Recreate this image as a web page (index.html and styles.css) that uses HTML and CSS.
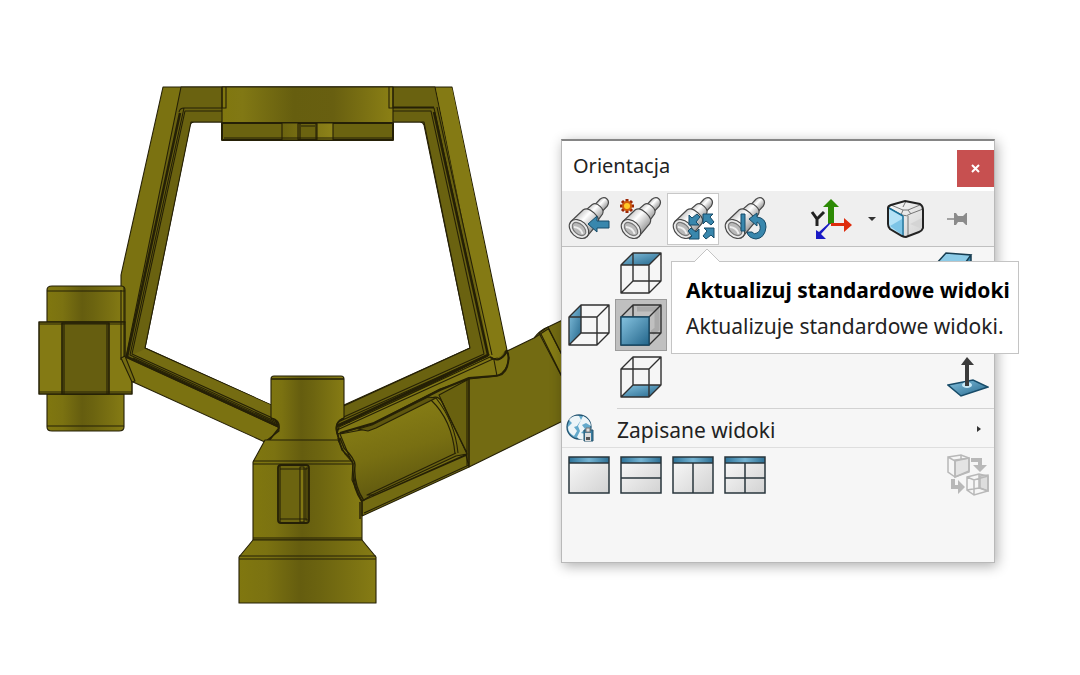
FILE: index.html
```html
<!DOCTYPE html>
<html lang="pl">
<head>
<meta charset="utf-8">
<title>Orientacja</title>
<link rel="stylesheet" href="styles.css">
</head>
<body>
<main class="workspace">
  <svg class="model" viewBox="0 0 1080 675" aria-label="Model 3D" role="img">
    <defs>
      <linearGradient id="cyl"><stop offset="0" stop-color="#80770f"/><stop offset=".2" stop-color="#7b7211"/><stop offset=".45" stop-color="#655d0f"/><stop offset=".6" stop-color="#6c6410"/><stop offset="1" stop-color="#867c14"/></linearGradient>
      <linearGradient id="block"><stop offset="0" stop-color="#80770f"/><stop offset=".12" stop-color="#817814"/><stop offset=".42" stop-color="#665e0f"/><stop offset=".65" stop-color="#685f10"/><stop offset="1" stop-color="#8b8015"/></linearGradient>
      <linearGradient id="pipe" x1="0" y1="0" x2=".35" y2="1"><stop offset="0" stop-color="#746b12"/><stop offset=".25" stop-color="#857c15"/><stop offset=".6" stop-color="#786f12"/><stop offset="1" stop-color="#5d560f"/></linearGradient>
      <linearGradient id="tab"><stop offset="0" stop-color="#6b630f"/><stop offset="1" stop-color="#8e8319"/></linearGradient>
    </defs>
    <g class="edge">
      <!-- right pipe -->
      <path fill="#736b12" d="M338 424L497 352L507 351L534 338Q540 330 548 327L575 314V415L469 467L362 516L338 450Z"/>
      <path fill="#857c15" d="M539 333L548 327L575 381V402Z"/>
      <path fill="none" d="M541 334L575 403M548 328L575 380M534 338L548 329"/>
      <path fill="#69610f" d="M469 379L439 395L466 455L469 467Z"/>
      <path fill="url(#pipe)" d="M340 434L372 428L432 398Q438 395 442 402L467 454L456 456L372 495L362 501Q354 488 352 463Z"/>
      <path fill="none" d="M431 400Q452 420 455 454M436 398Q455 422 458 453M441 400L467 453M469 379V467M467 380V466M467 454L375 495L367 495L456 453M362 501L467 455M364 513L469 465"/>
      <!-- frame -->
      <path fill="#7b7211" fill-rule="evenodd" d="M163 87H452L507 350L496 358L337 434V409L344 405L470 348L424 125Q423 122 420 122H194Q191 122 190 125L145 348L271 405L279 430L267 443L133 382L121 360V275Z"/>
      <path fill="#6a6210" d="M181 87H435L491 354L487 356L337 430V409L470 348L424 122H191L145 348L271 405L278 427L126 357Z" fill-rule="evenodd"/>
      <path fill="#756c12" stroke="none" d="M145 349L271 405V417L132 355Z"/>
      <path fill="#847a14" stroke="none" d="M436 88H452L506 349Q500 361 490 357Z"/>
      <path fill="none" d="M222 108H184L130 355L279 423M222 111H185L132 354L277 420M226 108H184Q180 108 179 112M133 358L278 424"/>
      <path fill="none" stroke-width="2.5" d="M180 113L127 357L278 426M434 112L488 355L337 426"/>
      <path fill="none" d="M391 108H434L488 355L338 422M391 111H431L484 354L337 420M389 107H434M437 107L492 355"/>
      <path fill="#807714" d="M490 357Q500 364 507 351L509 358Q507 372 497 376L469 379L440 389L372 424L337 434L339 427Z"/>
      <path fill="none" stroke-width="2" d="M490 357Q500 364 507 351Q510 357 507 367Q504 376 494 376L469 378L440 390L374 423L340 433"/>
      <path fill="#5f570e" d="M358 429L372 425L428 397L436 398L376 428L368 431Z"/>
      <path fill="none" d="M494 360L497 376M337 430L493 359M342 424L488 356"/>
      <!-- upper mounting block -->
      <path fill="url(#block)" d="M222 87H393V123H222Z"/>
      <path fill="#6b6310" stroke-width="2" d="M222 123H393V140H222Z"/>
      <path fill="url(#tab)" d="M282 123H298V140H282ZM317 123H333V140H317Z"/>
      <path fill="none" d="M222 87V108H226V87M393 87V108H389V87M300 123V140M316 123V140M301 126H315M224 138H392"/>
      <!-- left clamp -->
      <path fill="url(#cyl)" d="M47 290Q47 286 52 286H121Q125 286 125 290V322H47ZM47 394H124V427Q124 431 119 431H52Q47 431 47 427Z"/>
      <path fill="#847a14" stroke-width="1.5" d="M39 322H125V357L132 381V394H39Z"/>
      <path fill="#665e10" stroke-width="1.6" d="M62 323H109V394H62Z"/>
      <path fill="none" d="M47 291H125M47 426H124M39 324H125M39 392H132M64 324V394M107 324V394M121 290V360M124 287V357"/>
      <path fill="#756c12" d="M121 358L125 356L135 381L132 382Z"/>
      <!-- central post -->
      <path fill="url(#cyl)" d="M271 379Q271 376 274 376H341Q344 376 344 379V418Q334 422 337 433L340 441H266L279 431Q280 420 271 418Z"/>
      <path fill="none" stroke-width="1.6" d="M271 379H344M344 418Q334 422 337 433L341 447M271 418Q280 420 279 428L268 442M337 426Q345 421 350 422"/>
      <path fill="url(#cyl)" d="M265 440H338L345 454L353 463L352 480L362 502V540H253V462Z"/>
      <path fill="url(#cyl)" d="M253 540H362L376 557V603H239V557Z"/>
      <path fill="none" d="M253 464H353M253 461H353M253 538H362M239 556H376M239 559H376"/>
      <path fill="none" stroke-width="1.4" d="M338 438L342 450Q352 459 353 464Q351 486 362 502V516M340 438L344 448Q355 459 355 465Q353 484 364 501M360 502V519"/>
      <path fill="#6c6410" stroke-width="1.8" d="M278 468Q278 465 281 465H306Q309 465 309 468V520Q309 523 306 523H281Q278 523 278 520Z"/>
      <path fill="#817714" d="M300 467H304V522H300ZM306 468H308V520H306Z"/>
      <path fill="none" d="M280 469H307M280 519H307M280 466V522"/>
    </g>
  </svg>

  <section class="dialog" aria-labelledby="dialog-title">
    <header class="titlebar">
      <h1 class="title" id="dialog-title">Orientacja</h1>
      <button class="close" aria-label="Zamknij"><svg width="9" height="9" viewBox="0 0 9 9"><path d="M1 1L8 8M8 1L1 8" stroke="#fff" stroke-width="2"/></svg></button>
    </header>

    <div class="toolbar">
      <svg class="defs" aria-hidden="true">
        <defs>
          <linearGradient id="metal" x1="0" y1="0" x2="0" y2="1"><stop offset="0" stop-color="#c9c9c9"/><stop offset=".35" stop-color="#fff"/><stop offset="1" stop-color="#9c9c9c"/></linearGradient>
          <linearGradient id="blue" x1="0" y1="0" x2="1" y2="1"><stop offset="0" stop-color="#86c3e0"/><stop offset="1" stop-color="#23658a"/></linearGradient>
          <linearGradient id="face" x1="0" y1="0" x2="1" y2="1"><stop offset="0" stop-color="#fafafa"/><stop offset="1" stop-color="#d2d2d2"/></linearGradient>
          <linearGradient id="bar"><stop offset="0" stop-color="#2d7399"/><stop offset=".5" stop-color="#75b4d3"/><stop offset="1" stop-color="#2d6f93"/></linearGradient>
          <g id="scope" stroke="#484848" stroke-width="1.2" fill="url(#metal)" transform="translate(12 32) rotate(-47)">
            <path d="M27 -5H36Q41 -4 41 0T36 5H27Z"/>
            <path d="M18 -8L27 -7Q31 -6 31 0T27 7L18 8Z"/>
            <path d="M0 -11L17 -10Q22 -9 22 0T17 10L0 11Z"/>
            <ellipse rx="8" ry="11" fill="#ececec"/>
            <ellipse rx="5" ry="8" fill="#b9b9b9" stroke="#777"/>
            <path d="M-2 -5Q2 0 -1 6" fill="none" stroke="#eee" stroke-width="2"/>
          </g>
          <g id="cube" fill="none" stroke="#303030" stroke-width="1.4" stroke-linejoin="round">
            <path d="M13 1H41V29H13ZM1 13H29V41H1ZM1 13L13 1M29 13L41 1M29 41L41 29M1 41L13 29"/>
          </g>
        </defs>
      </svg>
      <button class="cell" aria-label="Poprzedni widok"><svg width="44" height="44" viewBox="0 0 44 44"><use href="#scope"/><path d="M21 27L30 19V24H42V31H30V35Z" fill="#3987ad" stroke="#174b68"/></svg></button>
      <button class="cell" aria-label="Nowy widok"><svg width="44" height="44" viewBox="0 0 44 44"><use href="#scope"/><path d="M8 2V16M1 9H15M3 4L13 14M13 4L3 14" stroke="#9b2605" stroke-width="3"/><circle cx="8" cy="9" r="4" fill="#ffc928" stroke="#d05b0c" stroke-width="2"/></svg></button>
      <button class="cell cell-active" aria-label="Aktualizuj standardowe widoki" aria-describedby="tip"><svg width="44" height="44" viewBox="0 0 44 44"><use href="#scope"/><g fill="#3987ad" stroke="#174b68" stroke-linejoin="round"><path d="M18 28V18L21 21L26 17L29 20L25 25L28 28Z"/><path d="M32 17H42L39 20L43 25L40 28L35 24L32 27Z"/><path d="M28 42H18L21 39L17 34L20 31L25 35L28 32Z"/><path d="M43 31V41L40 38L35 42L32 39L36 34L33 31Z"/></g></svg></button>
      <button class="cell" aria-label="Resetuj standardowe widoki"><svg width="44" height="44" viewBox="0 0 44 44"><use href="#scope"/><path d="M18 17H22V34H18Z" fill="#3987ad" stroke="#174b68"/><path d="M26 22L34 16V20Q43 21 43 30Q42 41 33 42Q25 41 24 35H29Q31 38 34 36Q38 34 37 29Q36 25 34 25V29Z" fill="#3987ad" stroke="#174b68"/></svg></button>

      <div class="tools-end">
        <button class="cell" aria-label="Oś pionowa Y"><svg width="46" height="44" viewBox="0 0 46 44"><path d="M5 15L10 22V29M17 15L10 22" fill="none" stroke="#222" stroke-width="3"/><path d="M21 27V10H16L24 2L32 10H27V27Z" fill="#2d8a05"/><path d="M24 26H37V21L45 28L37 35V29H24Z" fill="#de2b0c"/><path d="M23 27L14 37L19 42H9V33L12 35L22 26Z" fill="#1919c5"/></svg></button>
        <button class="caret" aria-label="Wybierz oś"><svg width="8" height="5" viewBox="0 0 8 5"><path d="M0 0H8L4 4Z" fill="#333"/></svg></button>
        <button class="selector" aria-label="Selektor widoku"><svg width="40" height="40" viewBox="0 0 40 40"><path d="M19 2L34 5Q37 7 37 11V29Q36 32 33 33L20 38Q18 38 16 37L4 30Q2 28 2 25V9Q2 7 5 6Z" fill="url(#face)"/><path d="M3 9L17 17V37L3 29Z" fill="#b4e2f7"/><path d="M4 27L16 20V36Z" fill="#7dc4e6" stroke="none"/><path d="M24 25L36 19V30Z" fill="#d4d4d4"/><path d="M3 9L16 16Q21 18 24 15L37 10M5 6L17 11L22 11L34 6M17 11L15 16M22 11L25 15M22 17V37M17 8L20 2" fill="none" stroke="#777"/><path d="M17 17V37M3 9L17 17" stroke="#16709a" stroke-width="1.5"/><path d="M19 2L34 5Q37 7 37 11V29Q36 32 33 33L20 38Q18 38 16 37L4 30Q2 28 2 25V9Q2 7 5 6Z" fill="none" stroke="#222" stroke-width="2"/></svg></button>
        <button class="pin" aria-label="Przypnij"><svg width="22" height="14" viewBox="0 0 22 14"><path d="M1 7H9" stroke="#888" stroke-width="1.5"/><path d="M8 1H10L12 4H17L20 1H21V13H20L17 10H12L10 13H8Z" fill="#8b8b8b"/></svg></button>
      </div>
    </div>

    <div class="views">
      <button class="cell col-2" aria-label="Góra"><svg width="42" height="42" viewBox="0 0 42 42"><path d="M1 13L13 1H41L29 13Z" fill="url(#blue)"/><use href="#cube"/></svg></button>
      <button class="cell col-end iso" aria-label="Izometryczny"><svg width="42" height="42" viewBox="0 0 42 42"><path d="M1 12L11 1L36 3L28 14Z" fill="#8ccbe7"/><path d="M28 14L36 3V28L28 40Z" fill="#3b86aa"/><path d="M1 12L11 1L36 3L28 14ZM1 12V38L28 40V14M28 40L36 28V3" fill="none" stroke="#173d51" stroke-width="1.5"/></svg></button>
      <button class="cell col-1" aria-label="Lewo"><svg width="42" height="42" viewBox="0 0 42 42"><path d="M1 13L13 1V29L1 41Z" fill="url(#blue)"/><use href="#cube"/></svg></button>
      <button class="cell cell-pressed col-2" aria-label="Przód" aria-pressed="true"><svg width="42" height="42" viewBox="0 0 42 42"><path d="M17 5H37V25L32 29" fill="none" stroke="#aaa" stroke-width="5"/><use href="#cube"/><path d="M1 13H29V41H1Z" fill="url(#blue)" stroke="#174b68" stroke-width="1.4"/></svg></button>
      <button class="cell col-2" aria-label="Dół"><svg width="42" height="42" viewBox="0 0 42 42"><path d="M1 41L13 29H41L29 41Z" fill="url(#blue)"/><use href="#cube"/></svg></button>
      <button class="cell col-end" aria-label="Prostopadły do"><svg width="42" height="42" viewBox="0 0 42 42"><path d="M1 29L26 24L41 31L14 40Z" fill="url(#blue)" stroke="#174b68" stroke-width="1.5"/><ellipse cx="20" cy="29" rx="5" ry="3" fill="#c7e9f7"/><path d="M18 30V9H14L20 1L27 9H22V30Z" fill="#3b3b3b"/></svg></button>
    </div>

    <button class="saved">
      <svg width="30" height="30" viewBox="0 0 30 30"><circle cx="13" cy="13" r="12" fill="#63a9cb" stroke="#245572" stroke-width="1.3"/><path d="M3 6Q7 1 13 2L15 6L11 12L8 13L11 17L8 22Q2 19 2 13L6 9ZM17 2Q24 5 25 12L20 9L16 11L19 15L15 19L20 20V24Q13 27 11 23L14 17L12 12Z" fill="#edf5f8"/><path d="M18 16H27V27H18Z" fill="#397b9e" stroke="#28566f"/><path d="M20 18V14H24V18Z" fill="#ddd" stroke="#777"/><path d="M19 19H25V27H19Z" fill="#ddd"/><path d="M20 23H24V26H20Z" fill="#555"/></svg>
      <span class="saved-label">Zapisane widoki</span>
      <svg width="4" height="6" viewBox="0 0 4 6"><path d="M0 0L4 3L0 6Z" fill="#333"/></svg>
    </button>

    <div class="layouts">
      <button class="cell" aria-label="Jeden widok"><svg width="42" height="38" viewBox="0 0 42 38"><path d="M1 1H41V37H1Z" fill="url(#face)"/><path d="M1 1H41V7H1Z" fill="url(#bar)"/><path d="M1 1H41V37H1ZM1 7H41" fill="none" stroke="#29363d" stroke-width="1.5"/></svg></button>
      <button class="cell" aria-label="Dwa widoki poziomo"><svg width="42" height="38" viewBox="0 0 42 38"><path d="M1 1H41V37H1Z" fill="url(#face)"/><path d="M1 1H41V7H1Z" fill="url(#bar)"/><path d="M1 1H41V37H1ZM1 7H41M1 22H41" fill="none" stroke="#29363d" stroke-width="1.5"/></svg></button>
      <button class="cell" aria-label="Dwa widoki pionowo"><svg width="42" height="38" viewBox="0 0 42 38"><path d="M1 1H41V37H1Z" fill="url(#face)"/><path d="M1 1H41V7H1Z" fill="url(#bar)"/><path d="M1 1H41V37H1ZM1 7H41M21 7V37" fill="none" stroke="#29363d" stroke-width="1.5"/></svg></button>
      <button class="cell" aria-label="Cztery widoki"><svg width="42" height="38" viewBox="0 0 42 38"><path d="M1 1H41V37H1Z" fill="url(#face)"/><path d="M1 1H41V7H1Z" fill="url(#bar)"/><path d="M1 1H41V37H1ZM1 7H41M21 7V37M1 22H41" fill="none" stroke="#29363d" stroke-width="1.5"/></svg></button>
      <button class="cell link-views" aria-label="Połącz widoki"><svg width="42" height="42" viewBox="0 0 42 42"><g fill="none" stroke="#b8b8b8" stroke-width="1.5"><path d="M8 6L22 4V17L8 23Z" fill="#e4e4e4"/><path d="M1 3L14 1L22 4V18L8 23L1 18ZM1 3L8 7L22 4M8 7V23M14 1V6"/><path d="M33 22L41 21V37L33 34Z" fill="#ddd"/><path d="M20 23L32 20L41 22V37L27 41L20 36ZM20 23L27 26L41 22M27 26V41M32 20V34L41 37M20 36L32 34"/></g><path d="M24 4H35V11H40L33 18L26 11H31V8H24ZM4 25H8V31H11V26L18 33L11 40V35H4Z" fill="#b8b8b8"/></svg></button>
    </div>
  </section>

  <div class="tooltip" id="tip" role="tooltip">
    <svg class="pointer" width="28" height="15" viewBox="0 0 28 15"><path d="M1 14L14 1L27 14V15H1Z" fill="#fff"/><path d="M1 14L14 1L27 14" fill="none" stroke="#c4c4c4"/></svg>
    <strong class="tip-title">Aktualizuj standardowe widoki</strong>
    <span class="tip-text">Aktualizuje standardowe widoki.</span>
  </div>
</main>
</body>
</html>
```
FILE: styles.css
```css
* { box-sizing: border-box; }

body {
  margin: 0;
  background: #fff;
  color: #222;
  font-family: "Noto Sans", "Open Sans", sans-serif;
  overflow-x: hidden;
}

button {
  margin: 0;
  padding: 0;
  border: 0;
  background: none;
  color: inherit;
  font: inherit;
}

svg { display: block; }

.workspace {
  position: relative;
  min-height: 100vh;
  overflow: hidden;
}

.model { width: 100%; height: auto; }

.edge {
  stroke: #252006;
  stroke-width: 1.1;
  stroke-linejoin: round;
}

/* Floating window over the model canvas */
.dialog {
  position: absolute;
  left: 561px;
  top: 139px;
  width: 434px;
  background: #f6f6f6;
  border: 1px solid #b9b9b9;
  border-top: 2px solid #858585;
  box-shadow: 2px 3px 12px rgba(0, 0, 0, 0.32);
}

.titlebar {
  display: flex;
  align-items: flex-end;
  justify-content: space-between;
  height: 50px;
  padding: 0 0 4px 11px;
  background: #fff;
}

.title {
  margin: 0;
  font-size: 20px;
  font-weight: 400;
  line-height: 42px;
}

.close {
  display: grid;
  place-items: center;
  width: 37px;
  height: 37px;
  background: #c75050;
}

.toolbar {
  display: flex;
  align-items: center;
  height: 56px;
  padding: 1px 0 0 1px;
  border-bottom: 1px solid #c0c0c0;
  background: #efefef;
}

.defs { position: absolute; width: 0; height: 0; }

.cell {
  display: grid;
  place-items: center;
  flex: none;
  width: 52px;
  height: 52px;
}

.cell-active { background: #fff; border: 1px solid #c8c8c8; }

.cell-pressed { background: #c0c0c0; border: 1px solid #9b9b9b; }

.tools-end {
  display: flex;
  align-items: center;
  margin-left: auto;
  padding-right: 26px;
}

.caret {
  display: grid;
  place-items: center;
  width: 24px;
  height: 44px;
  margin-left: 4px;
}

.selector { padding: 0 2px; }

.pin { margin-left: 18px; }

.views {
  display: grid;
  grid-template-columns: 52px 52px 1fr 52px;
  padding: 0 0 4px 1px;
}

.col-1 { grid-column: 1; }
.col-2 { grid-column: 2; }
.col-end { grid-column: 4; }
.iso { justify-self: end; width: 76px; }

.views::after {
  content: "";
  grid-column: 2 / -1;
  height: 1px;
  margin: 5px 0 -4px 2px;
  background: #d2d2d2;
}

.saved {
  display: flex;
  align-items: center;
  width: 100%;
  height: 39px;
  padding: 1px 13px 0 4px;
  border-bottom: 1px solid #dedede;
  text-align: left;
}

.saved-label {
  flex: 1;
  margin-left: 21px;
  padding-top: 3px;
  font-size: 21px;
  line-height: 32px;
}

.layouts {
  display: flex;
  padding: 1px 0 61px 1px;
}

.link-views { margin-left: auto; }

/* Hint attached to the active toolbar button */
.tooltip {
  position: absolute;
  left: 671px;
  top: 261px;
  display: grid;
  gap: 4px;
  padding: 12px 8px 11px 14px;
  border: 1px solid #c4c4c4;
  background: #fff;
  font-size: 21px;
  line-height: 32px;
  white-space: nowrap;
}

.tip-title { color: #000; }

.pointer {
  position: absolute;
  left: 21px;
  top: -14px;
}
```
